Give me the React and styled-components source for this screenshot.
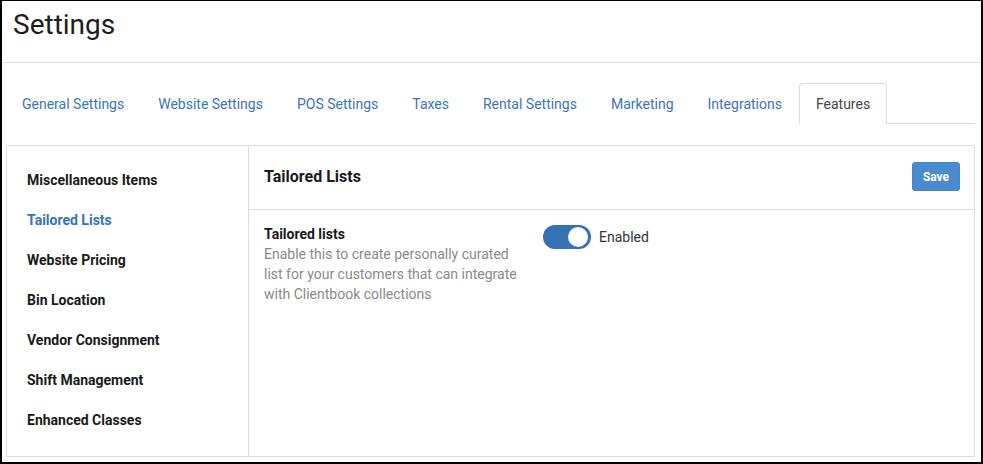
import React from "react";
import styled, { createGlobalStyle } from "styled-components";

const Global = createGlobalStyle`
  html, body { margin: 0; padding: 0; background: #fff; }
  body { font-family: Roboto, "Liberation Sans", Arial, sans-serif; }
  * { box-sizing: border-box; }
`;

const Frame = styled.div`
  width: 983px;
  height: 464px;
  border-left: 2px solid #000;
  border-top: 1px solid #000;
  border-right: 2px solid #000;
  border-bottom: 2px solid #000;
  background: #fff;
  display: flex;
  flex-direction: column;
  overflow: hidden;
`;

const Header = styled.div`
  height: 62px;
  border-bottom: 1px solid #dcdcdc;
  padding: 6px 0 0 11px;
  flex: none;
`;

const Title = styled.h1`
  margin: 0;
  font-size: 28px;
  font-weight: 400;
  color: #1e1e1e;
  line-height: 36px;
`;

const Body = styled.div`
  padding: 20px 6px 0 4px;
  display: flex;
  flex-direction: column;
`;

const Tabs = styled.div`
  display: flex;
  border-bottom: 1px solid #dcdcdc;
  height: 41px;
`;

const Tab = styled.div`
  height: 41px;
  padding: 0 16px;
  display: flex;
  align-items: center;
  font-size: 14px;
  color: ${(p) => (p.$active ? "#444" : "#3b76b6")};
  border: 1px solid ${(p) => (p.$active ? "#dcdcdc" : "transparent")};
  border-bottom: 1px solid ${(p) => (p.$active ? "#fff" : "transparent")};
  border-radius: 4px 4px 0 0;
  margin-bottom: -1px;
  background: #fff;
  &:first-child { margin-left: -1px; }
`;

const Panel = styled.div`
  margin-top: 21px;
  height: 312px;
  border: 1px solid #dcdcdc;
  display: flex;
`;

const Sidebar = styled.div`
  width: 242px;
  border-right: 1px solid #dcdcdc;
  padding: 14px 0 0 20px;
  display: flex;
  flex-direction: column;
`;

const SideItem = styled.div`
  height: 40px;
  display: flex;
  align-items: center;
  font-size: 14px;
  font-weight: 700;
  color: ${(p) => (p.$active ? "#3474b8" : "#1a1a1a")};
`;

const Main = styled.div`
  flex: 1;
  display: flex;
  flex-direction: column;
`;

const MainHeader = styled.div`
  height: 64px;
  border-bottom: 1px solid #dcdcdc;
  display: flex;
  align-items: center;
  justify-content: space-between;
  padding: 0 14px 2px 15px;
  flex: none;
`;

const MainTitle = styled.div`
  font-size: 16px;
  font-weight: 700;
  color: #1a1a1a;
`;

const SaveButton = styled.button`
  width: 48px;
  height: 29px;
  border: 1px solid #4386cb;
  border-radius: 3px;
  background: #4a8bd0;
  color: #fff;
  font-family: inherit;
  font-size: 12px;
  font-weight: 700;
  padding: 0;
`;

const Row = styled.div`
  display: flex;
  padding: 15px 15px 0 15px;
`;

const RowText = styled.div`
  width: 279px;
`;

const RowLabel = styled.div`
  font-size: 14px;
  font-weight: 700;
  color: #1a1a1a;
  line-height: 18px;
`;

const RowDesc = styled.div`
  font-size: 14px;
  color: #8a8a8a;
  line-height: 20px;
  width: 262px;
  margin-top: 1px;
`;

const ToggleWrap = styled.div`
  display: flex;
  align-items: center;
  gap: 8px;
  height: 24px;
`;

const Switch = styled.div`
  width: 48px;
  height: 24px;
  border-radius: 12px;
  background: #3471b5;
  position: relative;
`;

const Knob = styled.div`
  position: absolute;
  top: 2px;
  right: 3px;
  width: 20px;
  height: 20px;
  border-radius: 50%;
  background: #fff;
`;

const ToggleLabel = styled.span`
  font-size: 14px;
  color: #333;
`;

const tabs = [
  "General Settings",
  "Website Settings",
  "POS Settings",
  "Taxes",
  "Rental Settings",
  "Marketing",
  "Integrations",
  "Features",
];

const items = [
  "Miscellaneous Items",
  "Tailored Lists",
  "Website Pricing",
  "Bin Location",
  "Vendor Consignment",
  "Shift Management",
  "Enhanced Classes",
];

export default function App() {
  return (
    <>
      <Global />
      <Frame>
        <Header>
          <Title>Settings</Title>
        </Header>
        <Body>
          <Tabs>
            {tabs.map((t) => (
              <Tab key={t} $active={t === "Features"}>
                {t}
              </Tab>
            ))}
          </Tabs>
          <Panel>
            <Sidebar>
              {items.map((i) => (
                <SideItem key={i} $active={i === "Tailored Lists"}>
                  {i}
                </SideItem>
              ))}
            </Sidebar>
            <Main>
              <MainHeader>
                <MainTitle>Tailored Lists</MainTitle>
                <SaveButton>Save</SaveButton>
              </MainHeader>
              <Row>
                <RowText>
                  <RowLabel>Tailored lists</RowLabel>
                  <RowDesc>
                    Enable this to create personally curated list for your
                    customers that can integrate with Clientbook collections
                  </RowDesc>
                </RowText>
                <ToggleWrap>
                  <Switch>
                    <Knob />
                  </Switch>
                  <ToggleLabel>Enabled</ToggleLabel>
                </ToggleWrap>
              </Row>
            </Main>
          </Panel>
        </Body>
      </Frame>
    </>
  );
}
